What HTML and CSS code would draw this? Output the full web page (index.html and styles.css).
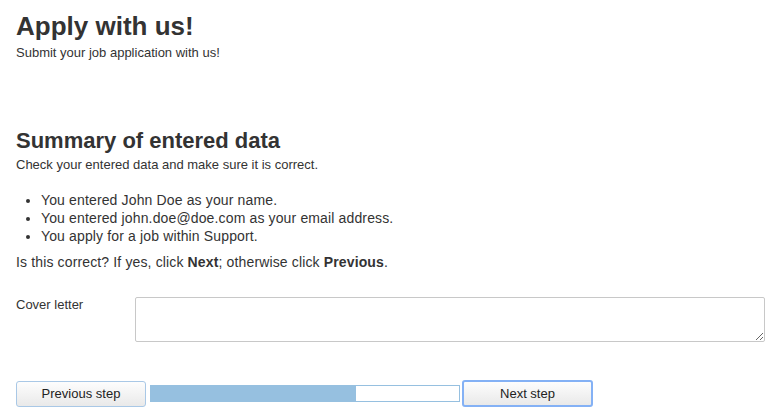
FILE: index.html
```html
<!DOCTYPE html>
<html lang="en">
<head>
  <meta charset="UTF-8" />
  <meta name="viewport" content="width=device-width, initial-scale=1.0"/>
  <title>Apply with us!</title>
  <link rel="stylesheet" href="styles.css">
</head>
<body>
  <div class="page">
    <h1>Apply with us!</h1>
    <p class="lead">Submit your job application with us!</p>

    <h2>Summary of entered data</h2>
    <p class="hint">Check your entered data and make sure it is correct.</p>

    <ul class="summary">
      <li>You entered John Doe as your name.</li>
      <li>You entered john.doe@doe.com as your email address.</li>
      <li>You apply for a job within Support.</li>
    </ul>

    <p class="confirm">Is this correct? If yes, click <strong>Next</strong>; otherwise click <strong>Previous</strong>.</p>

    <div class="field">
      <label for="cover">Cover letter</label>
      <textarea id="cover"></textarea>
    </div>

    <div class="steps">
      <button class="step-btn">Previous step</button>
      <div class="progress"><div class="progress-fill" style="width: 66.7%"></div></div>
      <button class="step-btn next">Next step</button>
    </div>
  </div>
</body>
</html>
```

FILE: styles.css
```css
body {
  margin: 0;
  font-family: "Liberation Sans", Arial, sans-serif;
  color: #333;
  background-color: #fff;
}
.page {
  padding: 11px 10px 0 16px;
}
h1 {
  margin: 0;
  font-size: 26px;
  line-height: 30px;
  font-weight: bold;
}
.lead {
  margin: 4px 0 0 0;
  font-size: 13px;
  line-height: 15px;
}
h2 {
  margin: 68px 0 0 0;
  font-size: 22px;
  line-height: 26px;
  font-weight: bold;
}
.hint {
  margin: 3px 0 0 0;
  font-size: 13px;
  line-height: 15px;
}
.summary {
  margin: 19px 0 0 0;
  padding-left: 25px;
  font-size: 14px;
  line-height: 18px;
  letter-spacing: 0.14px;
}
.confirm {
  margin: 8px 0 0 0;
  font-size: 14px;
  line-height: 18px;
  letter-spacing: 0.14px;
}
.field {
  display: flex;
  align-items: flex-start;
  margin-top: 26px;
}
.field label {
  flex-shrink: 0;
  width: 119px;
  font-size: 13px;
  line-height: 15px;
}
.field textarea {
  flex-shrink: 0;
  width: 630px;
  height: 45px;
  box-sizing: border-box;
  margin: 0;
  border: 1px solid #c8c8c8;
  border-radius: 2px;
  font-family: inherit;
}
.steps {
  display: flex;
  align-items: center;
  margin-top: 38px;
}
.step-btn {
  width: 130px;
  height: 26px;
  padding: 0;
  border: 1px solid #a9c8e6;
  border-radius: 3px;
  background: linear-gradient(#fdfdfd, #e9e9e9);
  color: #222;
  font-family: inherit;
  font-size: 13px;
  cursor: pointer;
}
.step-btn.next {
  width: 131px;
  height: 27px;
  margin-left: 2px;
  border: 2px solid #84b1f5;
}
.progress {
  width: 310px;
  height: 17px;
  box-sizing: border-box;
  margin-left: 4px;
  border: 1px solid #96c0e0;
  background-color: #fff;
}
.progress-fill {
  height: 100%;
  background-color: #96c0e0;
}
```
